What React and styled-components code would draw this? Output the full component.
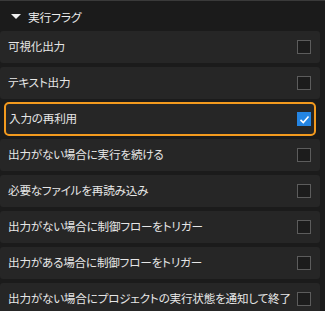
import React from "react";
import styled, { createGlobalStyle } from "styled-components";

const Global = createGlobalStyle`
  html, body { margin: 0; padding: 0; background: #1b1b1b; }
  body { font-family: "Noto Sans CJK JP", "Noto Sans", sans-serif; }
`;

const Panel = styled.div`
  width: 325px;
  height: 311px;
  overflow: hidden;
  background: #1b1b1b;
  border-top: 1px solid #3a3a3a;
  box-sizing: border-box;
  display: flex;
  flex-direction: column;
`;

const Header = styled.div`
  height: 30px;
  flex: none;
  display: flex;
  align-items: center;
  gap: 7px;
  padding-left: 11px;
  color: #ececec;
  font-size: 11.8px;
  letter-spacing: -0.2px;
  font-feature-settings: "palt";
`;

const Caret = styled.span`
  width: 0;
  height: 0;
  border-left: 5px solid transparent;
  border-right: 5px solid transparent;
  border-top: 5px solid #f0f0f0;
  margin-top: 1px;
`;

const List = styled.div`
  display: flex;
  flex-direction: column;
  gap: 4px;
  width: 320px;
`;

const Row = styled.div`
  box-sizing: border-box;
  flex: none;
  display: flex;
  align-items: center;
  justify-content: space-between;
  background: #262626;
  color: #e6e6e6;
  font-size: 11.6px;
  letter-spacing: -0.2px;
  font-feature-settings: "palt";
  height: ${(p) => (p.$active ? "34px" : "32px")};
  margin: ${(p) => (p.$active ? "-1px 4px" : "0")};
  border: ${(p) => (p.$active ? "2px solid #f39a1e" : "none")};
  border-radius: ${(p) => (p.$active ? "5px" : "3px")};
  padding: ${(p) => (p.$active ? "0 3px 0 3px" : "0 9px 0 8px")};
  white-space: nowrap;
`;

const Label = styled.span`
  line-height: 1;
  padding-bottom: 1px;
`;

const Box = styled.span`
  box-sizing: border-box;
  width: 14px;
  height: 14px;
  flex: none;
  display: flex;
  align-items: center;
  justify-content: center;
  border: ${(p) => (p.$checked ? "none" : "1.5px solid #5c5c5c")};
  background: ${(p) => (p.$checked ? "#2485e3" : "#1c1c1c")};
`;

const items = [
  { label: "可視化出力" },
  { label: "テキスト出力" },
  { label: "入力の再利用", checked: true, active: true },
  { label: "出力がない場合に実行を続ける" },
  { label: "必要なファイルを再読み込み" },
  { label: "出力がない場合に制御フローをトリガー" },
  { label: "出力がある場合に制御フローをトリガー" },
  { label: "出力がない場合にプロジェクトの実行状態を通知して終了" },
];

export default function App() {
  return (
    <>
      <Global />
      <Panel>
        <Header>
          <Caret />
          <span>実行フラグ</span>
        </Header>
        <List>
          {items.map((it) => (
            <Row key={it.label} $active={it.active}>
              <Label>{it.label}</Label>
              <Box $checked={it.checked}>
                {it.checked && (
                  <svg width="11" height="11" viewBox="0 0 11 11">
                    <polyline
                      points="1.5,5.8 4.3,8.5 9.5,2.5"
                      fill="none"
                      stroke="#fff"
                      strokeWidth="1.6"
                    />
                  </svg>
                )}
              </Box>
            </Row>
          ))}
        </List>
      </Panel>
    </>
  );
}
